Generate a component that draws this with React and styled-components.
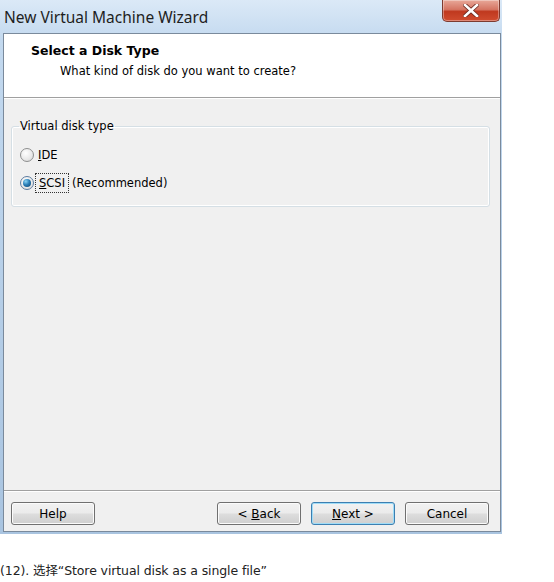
import React from 'react';
import styled, { createGlobalStyle } from 'styled-components';

const GlobalStyle = createGlobalStyle`
  body {
    margin: 0;
    background: white;
    font-family: 'DejaVu Sans', 'Noto Sans CJK SC', sans-serif;
  }
`;

const Page = styled.div`
  width: 554px;
  height: 582px;
  background: white;
`;

const Window = styled.div`
  width: 502px;
  height: 534px;
  display: flex;
  flex-direction: column;
  background: linear-gradient(to bottom, #dbe9f7 0px, #c3d9ef 40px, #a9c4e0 100%);
  padding: 0 1px 2px 3px;
  box-sizing: border-box;
`;

const TitleBar = styled.div`
  height: 33px;
  display: flex;
  align-items: flex-start;
  justify-content: space-between;
  flex-shrink: 0;
`;

const Title = styled.div`
  font-family: 'Noto Sans', sans-serif;
  font-size: 15.5px;
  color: #1e1e1e;
  padding: 6px 0 0 1px;
`;

const CloseButton = styled.div`
  width: 56px;
  height: 21px;
  margin-right: 1px;
  border: 1px solid #7d3b30;
  border-top: none;
  border-radius: 0 0 5px 5px;
  background: linear-gradient(to bottom, #e8a899 0%, #d57563 45%, #c0391f 55%, #d04c2f 100%);
  display: flex;
  align-items: center;
  justify-content: center;
  box-shadow: inset 0 0 0 1px rgba(255, 255, 255, 0.35);
`;

const Client = styled.div`
  flex: 1;
  display: flex;
  flex-direction: column;
  background: #f0f0f0;
  border: 1px solid #7a8a9c;
`;

const Header = styled.div`
  height: 64px;
  background: white;
  border-bottom: 1px solid #a0a0a0;
  box-shadow: 0 1px 0 #ffffff;
  padding: 9px 0 0 27px;
  box-sizing: border-box;
  flex-shrink: 0;
`;

const HeaderTitle = styled.div`
  font-weight: bold;
  font-size: 12.5px;
  color: #000;
`;

const HeaderText = styled.div`
  font-size: 11.5px;
  color: #000;
  margin: 6px 0 0 29px;
`;

const Body = styled.div`
  flex: 1;
  padding: 21px 10px 0 7px;
`;

const GroupBox = styled.fieldset`
  margin: 0;
  padding: 12px 8px 8px 8px;
  border: 1px solid #d5dfe5;
  border-radius: 3px;
  box-shadow: inset 0 0 0 1px #ffffff;
  display: flex;
  flex-direction: column;
  gap: 9px;
  height: 88px;
  box-sizing: border-box;
`;

const Legend = styled.legend`
  font-size: 11.5px;
  padding: 0 1px;
  margin-left: -1px;
  color: #000;
`;

const RadioRow = styled.label`
  display: flex;
  align-items: center;
  font-size: 11.5px;
  color: #000;
  height: 19px;
`;

const RadioCircle = styled.span`
  width: 14px;
  height: 14px;
  border-radius: 50%;
  border: 1px solid ${p => (p.checked ? '#5d7ca0' : '#8e8f8f')};
  box-sizing: border-box;
  background: radial-gradient(circle at 40% 35%, #ffffff 0%, #e8e8e8 60%, #d0d0d0 100%);
  display: flex;
  align-items: center;
  justify-content: center;
  margin-right: 4px;
  flex-shrink: 0;

  &::after {
    content: '';
    display: ${p => (p.checked ? 'block' : 'none')};
    width: 8px;
    height: 8px;
    border-radius: 50%;
    background: radial-gradient(circle at 35% 30%, #8ad4f5 0%, #2b7fb8 45%, #0b3f6b 100%);
  }
`;

const Focus = styled.span`
  outline: 1px dotted #333;
  outline-offset: 2px;
  padding: 0 1px;
  margin-right: 6px;
`;

const Footer = styled.div`
  height: 41px;
  flex-shrink: 0;
  border-top: 1px solid #a0a0a0;
  box-shadow: inset 0 1px 0 #ffffff;
  display: flex;
  align-items: flex-start;
  padding: 11px 9px 0 7px;
  box-sizing: border-box;
`;

const Button = styled.div`
  width: 84px;
  height: 23px;
  box-sizing: border-box;
  border: 1px solid ${p => (p.primary ? '#3c7fb1' : '#707070')};
  border-radius: 3px;
  background: linear-gradient(to bottom, #f2f2f2 0%, #ebebeb 48%, #dddddd 52%, #cfcfcf 100%);
  box-shadow: inset 0 0 0 1px ${p => (p.primary ? '#9fdcf7' : '#fbfbfb')};
  display: flex;
  align-items: center;
  justify-content: center;
  font-size: 12px;
  color: #000;
  white-space: pre;
  margin-left: ${p => p.gap || 0}px;
`;

const Caption = styled.div`
  margin-top: 26px;
  font-family: 'DejaVu Sans', 'Noto Sans CJK SC', sans-serif;
  font-size: 12.5px;
  color: #222;
  letter-spacing: -0.1px;
`;

const CloseIcon = () => (
  <svg width="16" height="13" viewBox="0 0 16 13">
    <path d="M2 1 L14 12 M14 1 L2 12" stroke="#6a2a20" strokeWidth="4.2" strokeLinecap="square" />
    <path d="M2 1 L14 12 M14 1 L2 12" stroke="#ffffff" strokeWidth="2.6" strokeLinecap="square" />
  </svg>
);

export default function App() {
  return (
    <Page>
      <GlobalStyle />
      <Window>
        <TitleBar>
          <Title>New Virtual Machine Wizard</Title>
          <CloseButton>
            <CloseIcon />
          </CloseButton>
        </TitleBar>
        <Client>
          <Header>
            <HeaderTitle>Select a Disk Type</HeaderTitle>
            <HeaderText>What kind of disk do you want to create?</HeaderText>
          </Header>
          <Body>
            <GroupBox>
              <Legend>Virtual disk type</Legend>
              <RadioRow>
                <RadioCircle />
                <span><u>I</u>DE</span>
              </RadioRow>
              <RadioRow>
                <RadioCircle checked />
                <Focus><u>S</u>CSI</Focus>
                <span>(Recommended)</span>
              </RadioRow>
            </GroupBox>
          </Body>
          <Footer>
            <Button>Help</Button>
            <Button gap={122}>{'< '}<u>B</u>ack</Button>
            <Button primary gap={10}><u>N</u>ext{' >'}</Button>
            <Button gap={10}>Cancel</Button>
          </Footer>
        </Client>
      </Window>
      <Caption>(12). 选择“Store virtual disk as a single file”</Caption>
    </Page>
  );
}
